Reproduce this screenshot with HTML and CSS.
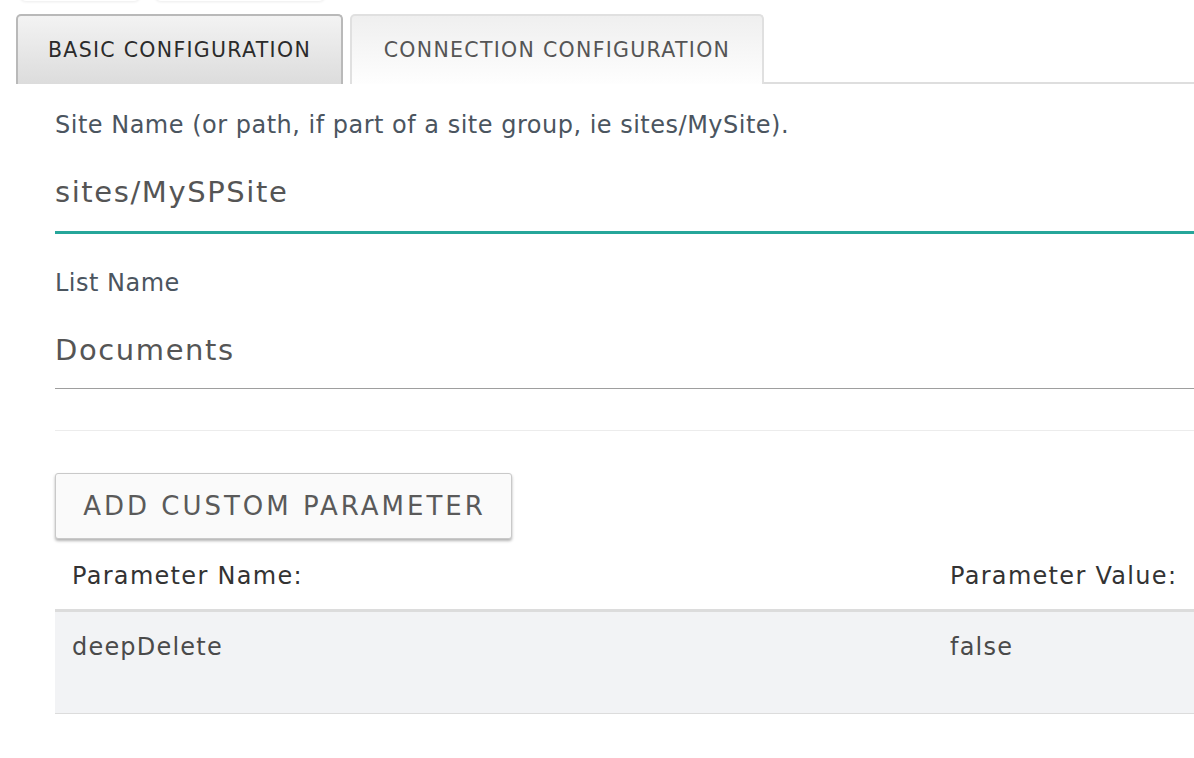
FILE: index.html
```html
<!DOCTYPE html>
<html>
<head>
<meta charset="utf-8">
<link rel="stylesheet" href="styles.css">
</head>
<body>
<div class="ghosts"><span class="ghost g1"></span><span class="ghost g2"></span></div>
<div class="page">
  <div class="tabs">
    <div class="tab tab-active">BASIC CONFIGURATION</div>
    <div class="tab tab-other">CONNECTION CONFIGURATION</div>
    <div class="tab-fill"></div>
  </div>
  <div class="content">
    <div class="field">
      <div class="label">Site Name (or path, if part of a site group, ie sites/MySite).</div>
      <div class="input input-focus">sites/MySPSite</div>
    </div>
    <div class="field">
      <div class="label">List Name</div>
      <div class="input">Documents</div>
    </div>
    <div class="divider"></div>
    <button class="btn">ADD CUSTOM PARAMETER</button>
    <div class="table">
      <div class="thead">
        <div class="cell c-name">Parameter Name:</div>
        <div class="cell c-val">Parameter Value:</div>
      </div>
      <div class="trow">
        <div class="cell c-name">deepDelete</div>
        <div class="cell c-val">false</div>
      </div>
    </div>
  </div>
</div>
</body>
</html>
```
FILE: styles.css
```css
html, body {
  margin: 0;
  padding: 0;
  background: #fff;
  overflow: hidden;
}
body {
  font-family: "DejaVu Sans", "Noto Sans", sans-serif;
  width: 1194px;
  height: 758px;
  position: relative;
}
.ghosts {
  height: 0;
  position: relative;
}
.ghost {
  position: absolute;
  top: -6px;
  height: 7px;
  border-radius: 0 0 6px 6px;
  box-shadow: 0 1px 3px rgba(0,0,0,0.08);
  background: #fff;
}
.g1 { left: 20px; width: 120px; }
.g2 { left: 155px; width: 170px; }
.page {
  padding-top: 14px;
  padding-left: 16px;
}
.tabs {
  display: flex;
  align-items: flex-end;
  height: 70px;
}
.tab {
  box-sizing: border-box;
  height: 70px;
  display: flex;
  align-items: center;
  justify-content: center;
  font-size: 20.5px;
  letter-spacing: 1.3px;
  border-radius: 5px 5px 0 0;
  padding-bottom: 1px;
}
.tab-active {
  width: 327px;
  color: #2b2b2b;
  border: 2px solid #b9b9b9;
  border-bottom: none;
  background: linear-gradient(#f3f3f3, #dcdcdc);
}
.tab-other {
  width: 414px;
  margin-left: 7px;
  color: #555;
  border: 2px solid #e0e0e0;
  border-bottom: none;
  background: linear-gradient(#efefef, #fefefe);
}
.tab-fill {
  flex: 1;
  height: 1px;
  border-bottom: 2px solid #dedede;
}
.content {
  padding-left: 39px;
}
.field {
  padding-top: 26px;
}
.field + .field {
  padding-top: 34px;
}
.label {
  font-size: 24px;
  color: #4b555f;
  line-height: 30px;
  letter-spacing: 0.5px;
}
.input {
  font-size: 29px;
  color: #555;
  line-height: 36px;
  padding-top: 34px;
  padding-bottom: 20px;
  border-bottom: 1px solid #9e9e9e;
  letter-spacing: 1.6px;
}
.input-focus {
  padding-bottom: 21px;
  border-bottom: 3px solid #26a69a;
}
.divider {
  margin-top: 41px;
  height: 1px;
  background: #ececec;
}
.btn {
  display: block;
  margin-top: 42px;
  width: 457px;
  height: 66px;
  box-sizing: border-box;
  border: 1px solid #c9c9c9;
  border-radius: 3px;
  background: #fafafa;
  box-shadow: 0 2px 3px rgba(0,0,0,0.3);
  font-family: inherit;
  font-size: 26px;
  letter-spacing: 3px;
  color: #5a5a5a;
  padding: 0 0 0 2px;
}
.thead, .trow {
  display: flex;
  font-size: 24px;
  line-height: 30px;
}
.thead {
  padding-top: 22px;
  padding-bottom: 18px;
  border-bottom: 3px solid #dcdcdc;
  color: #333;
  letter-spacing: 1.3px;
}
.trow {
  box-sizing: border-box;
  height: 102px;
  padding-top: 20px;
  background: #f2f3f5;
  border-bottom: 1px solid #dcdcdc;
  color: #4a4a4a;
  letter-spacing: 1.2px;
}
.c-name {
  width: 895px;
  padding-left: 17px;
  box-sizing: border-box;
}
.c-val {
  flex: 1;
}
```
